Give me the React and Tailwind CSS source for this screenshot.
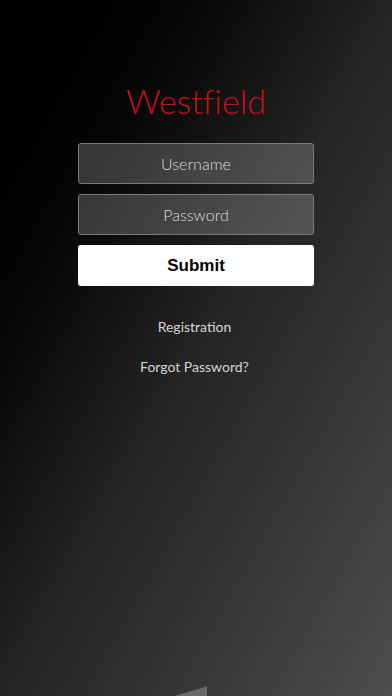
export default function App() {
  return (
    <div className="relative h-[696px] w-full overflow-hidden bg-linear-to-br from-black via-[#242424] to-[#4e4e4e] font-['Lato','Open_Sans',sans-serif]">
      <div className="flex flex-col items-center pt-[81px]">
        {/* Logo wordmark */}
        <h1 className="text-[34px] leading-[40px] font-light text-[#c8101a] [font-variant-ligatures:none]">Westfield</h1>

        {/* Login form */}
        <form className="mt-[22px] flex w-[236px] flex-col gap-[10px]" onSubmit={(e) => e.preventDefault()}>
          <input
            type="text"
            placeholder="Username"
            className="h-[41px] rounded-[3px] border border-[#7a7a7a] bg-white/20 text-center text-[16px] font-light text-white placeholder:text-[#dcdcdc] outline-none"
          />
          <input
            type="password"
            placeholder="Password"
            className="h-[41px] rounded-[3px] border border-[#7a7a7a] bg-white/20 text-center text-[16px] font-light text-white placeholder:text-[#dcdcdc] outline-none"
          />
          <button
            type="submit"
            className="h-[41px] rounded-[3px] bg-white font-['Liberation_Sans',sans-serif] text-[17px] font-bold text-black"
          >
            Submit
          </button>
        </form>

        {/* Links */}
        <div className="mt-[31px] flex flex-col items-center gap-[20px] pr-[3px] text-[14px] leading-[20px] font-normal text-[#d6d6d6]">
          <a href="#">Registration</a>
          <a href="#">Forgot Password?</a>
        </div>
      </div>

      {/* partially visible shape at bottom edge */}
      <svg className="absolute bottom-0 left-[174px]" width="36" height="10" viewBox="0 0 36 10">
        <polygon points="0,10 28,2 33,0 33,10" fill="#6a6a6a" />
      </svg>
    </div>
  );
}
